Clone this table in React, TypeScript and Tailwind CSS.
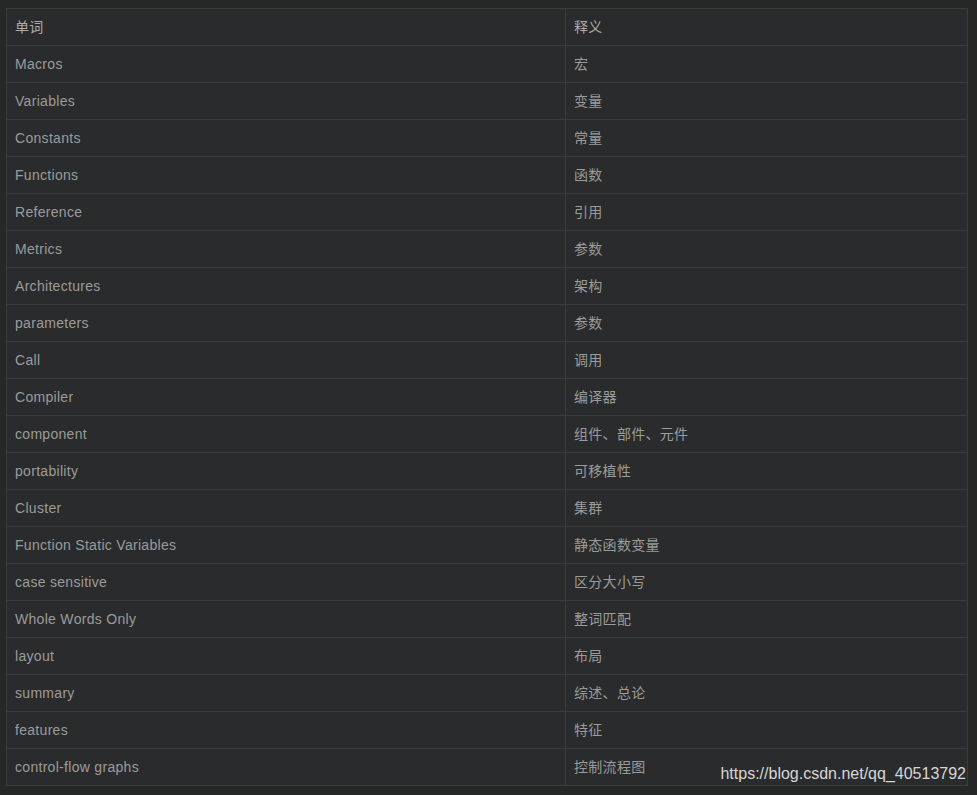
const rows: [string, string][] = [
  ['Macros', '宏'],
  ['Variables', '变量'],
  ['Constants', '常量'],
  ['Functions', '函数'],
  ['Reference', '引用'],
  ['Metrics', '参数'],
  ['Architectures', '架构'],
  ['parameters', '参数'],
  ['Call', '调用'],
  ['Compiler', '编译器'],
  ['component', '组件、部件、元件'],
  ['portability', '可移植性'],
  ['Cluster', '集群'],
  ['Function Static Variables', '静态函数变量'],
  ['case sensitive', '区分大小写'],
  ['Whole Words Only', '整词匹配'],
  ['layout', '布局'],
  ['summary', '综述、总论'],
  ['features', '特征'],
  ['control-flow graphs', '控制流程图'],
];

const font = "font-['Liberation_Sans','Noto_Sans_CJK_SC',sans-serif]";

function Cell({ children, head, first }: { children: string; head?: boolean; first?: boolean }) {
  return (
    <div
      className={`h-[37px] flex items-center px-2 border-r border-b border-[#3a3b3c] text-[14px] tracking-[0.3px] ${
        first ? 'w-[559px]' : 'w-[402px]'
      } ${head ? 'text-[#ababab]' : 'text-[#9b9b9b]'}`}
    >
      {children}
    </div>
  );
}

export default function App() {
  return (
    <div className={`relative w-[977px] h-[795px] bg-[#262727] pt-2 pl-[6px] ${font}`}>
      <div className="w-fit border-l border-t border-[#3a3b3c] bg-[#2a2b2c]">
        <div className="flex">
          <Cell head first>单词</Cell>
          <Cell head>释义</Cell>
        </div>
        {rows.map(([word, meaning]) => (
          <div key={word + meaning} className="flex">
            <Cell first>{word}</Cell>
            <Cell>{meaning}</Cell>
          </div>
        ))}
      </div>
      {/* csdn watermark */}
      <span className="absolute right-[11px] top-[764px] text-[16px] leading-[20px] text-[#d6d6d6] font-['Liberation_Sans',sans-serif]">
        https://blog.csdn.net/qq_40513792
      </span>
    </div>
  );
}
